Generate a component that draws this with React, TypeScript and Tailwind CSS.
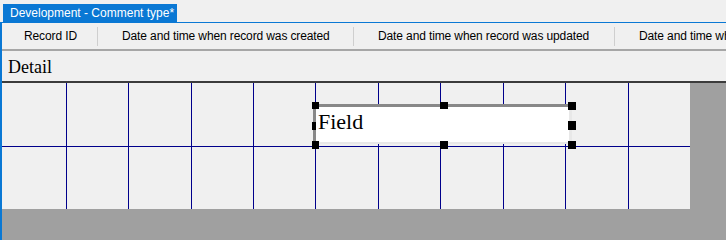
const cols = [
  { label: 'Record ID', w: 'w-[96px] pl-[22px]' },
  { label: 'Date and time when record was created', w: 'w-[256px] pl-[24px]' },
  { label: 'Date and time when record was updated', w: 'w-[261px] pl-[24px]' },
  { label: 'Date and time when record was deleted', w: 'flex-1 pl-[24px]' },
];

const vLines = [64, 126, 189, 251, 313, 376, 438, 501, 563, 626];

const Handle = ({ className }: { className: string }) => (
  <div className={`absolute bg-black ${className}`} />
);

const FieldControl = () => (
  <div className="absolute left-[310px] top-[19px] w-[264px] h-[47px] pt-[2px] pl-[1px] pr-[4px] pb-[5px]">
    <div className="h-full bg-white border-t-[3px] border-l-[3px] border-r-[3px] border-b-2 border-[#888888] border-r-[#e8e8e8] border-b-[#e8e8e8] pl-[2px] pt-[4px] font-['Liberation_Serif','Times_New_Roman',serif] text-[22px] leading-none">
      Field
    </div>
    <Handle className="left-0 top-0 w-[7px] h-[7px]" />
    <Handle className="left-[128px] top-0 w-[8px] h-[7px]" />
    <Handle className="right-0 top-0 w-[8px] h-[8px]" />
    <Handle className="left-0 top-[20px] w-[4px] h-[8px]" />
    <Handle className="right-0 top-[19px] w-[8px] h-[9px]" />
    <Handle className="left-0 bottom-0 w-[7px] h-[8px]" />
    <Handle className="left-[128px] bottom-0 w-[8px] h-[8px]" />
    <Handle className="right-0 bottom-0 w-[8px] h-[8px]" />
  </div>
);

export default function App() {
  return (
    <div className="w-[726px] h-[240px] overflow-hidden bg-[#f0f0f0] font-['Liberation_Sans',Arial,sans-serif] text-[12px] text-black">
      {/* tab strip */}
      <div className="h-[22px] pt-[4px] pl-[3px] flex">
        <div className="h-[18px] w-[174px] pl-[7px] bg-[#0a78d4] text-white leading-[18px] whitespace-nowrap">
          Development - Comment type*
        </div>
      </div>

      <div className="h-[218px] border-t border-l-2 border-[#0a78d4] flex flex-col">
        {/* column header */}
        <div className="h-[28px] flex border-b-2 border-[#a6a6a6] whitespace-nowrap overflow-hidden tracking-[-0.12px]">
          {cols.map((c, i) => (
            <div key={c.label} className={`flex h-[26px] shrink-0 ${c.w}`}>
              <span className="flex-1 leading-[26px] overflow-hidden">{c.label}</span>
              {i < cols.length - 1 && <div className="w-px mt-[4px] h-[19px] bg-[#cfcfcf]" />}
            </div>
          ))}
        </div>

        {/* detail band */}
        <div className="h-[32px] border-b-2 border-[#3c3c3c] pl-[6px] pt-[7px] font-['Liberation_Serif','Times_New_Roman',serif] text-[18px] leading-none">
          Detail
        </div>

        {/* design surface */}
        <div className="flex h-[126px]">
          <div className="relative w-[688px] h-[126px] bg-[#f0f0f0]">
            <svg className="absolute inset-0" width="688" height="126" shapeRendering="crispEdges">
              {vLines.map((x) => (
                <line key={x} x1={x + 0.5} y1={0} x2={x + 0.5} y2={126} stroke="#00008b" strokeWidth={1} />
              ))}
              <line x1={0} y1={63.5} x2={688} y2={63.5} stroke="#00008b" strokeWidth={1} />
            </svg>
            <FieldControl />
          </div>
          <div className="flex-1 bg-[#a0a0a0]" />
        </div>

        <div className="flex-1 bg-[#a0a0a0]" />
      </div>
    </div>
  );
}
